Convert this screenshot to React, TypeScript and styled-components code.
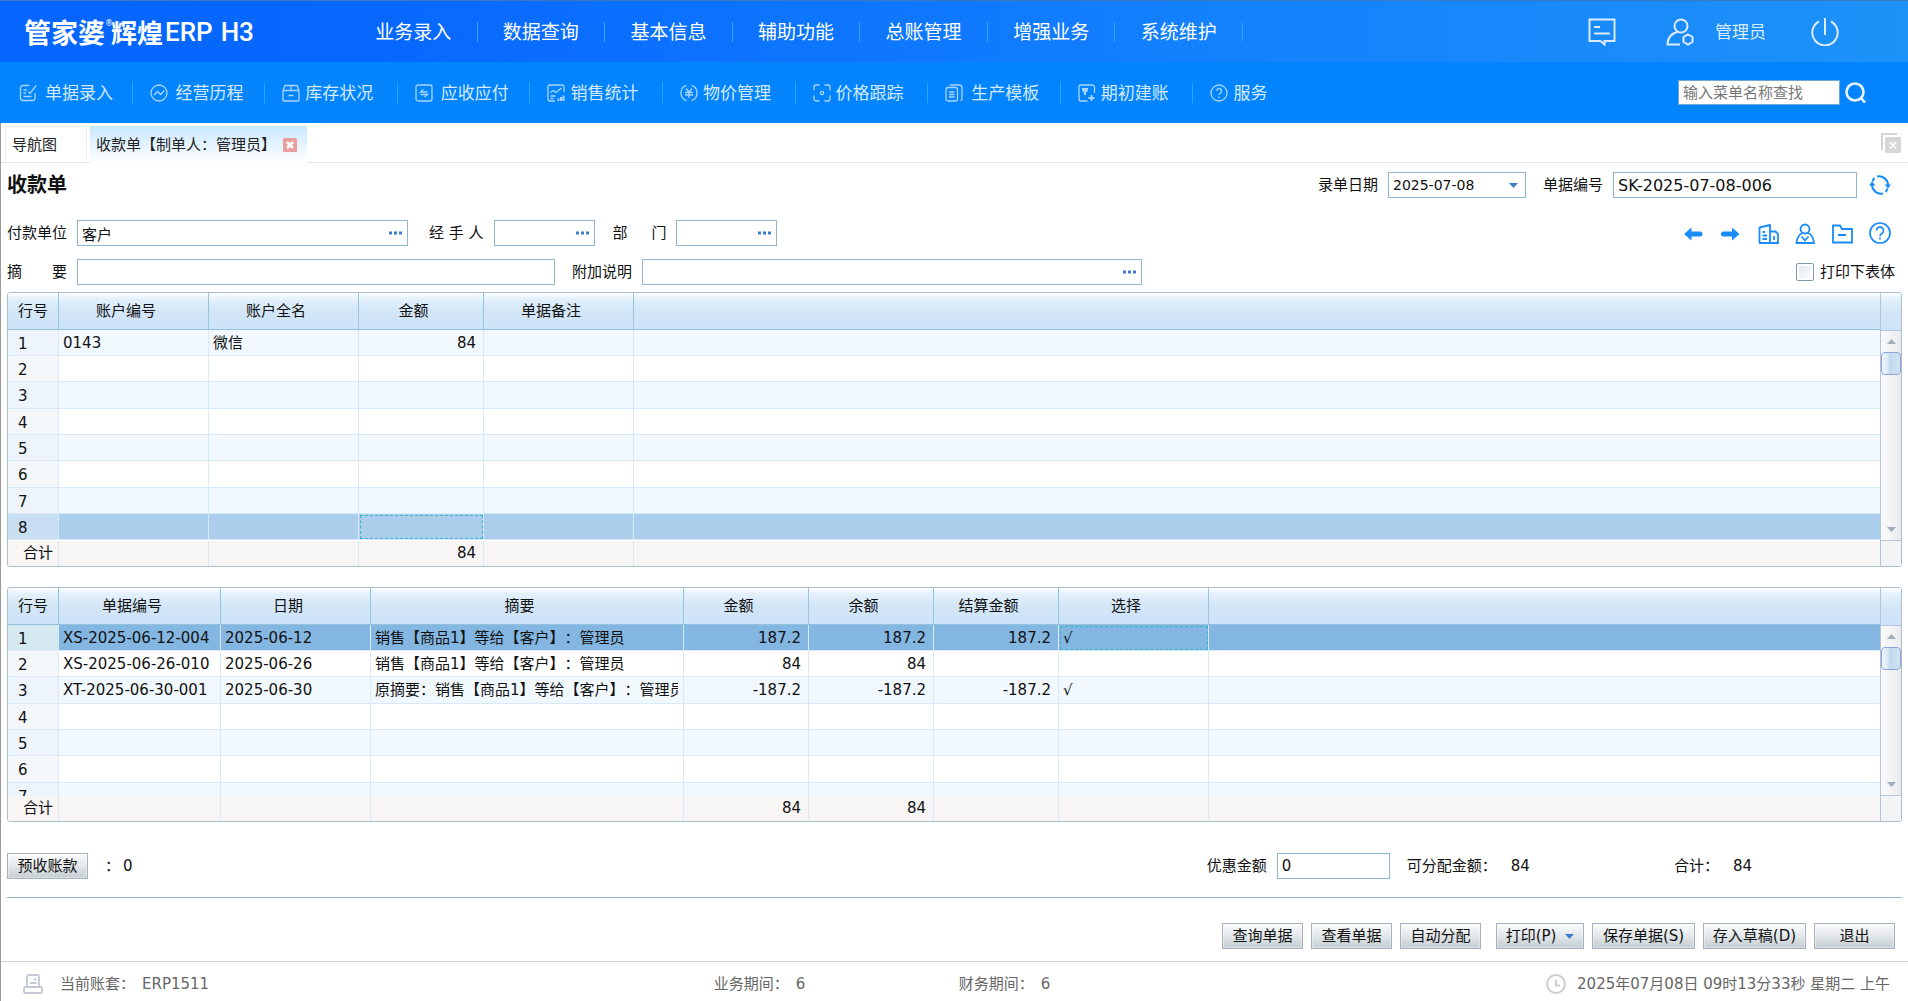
import React from 'react';
import styled, { createGlobalStyle, css } from 'styled-components';

const GlobalStyle = createGlobalStyle`
  *, *::before, *::after { box-sizing: border-box; }
  html, body { margin: 0; background: #fff; }
  body, input, button, select, table {
    font-family: "DejaVu Sans", "Noto Sans CJK SC", sans-serif;
    font-size: 15px;
    line-height: 20px;
    color: #111;
    text-spacing-trim: space-all;
  }
  button { cursor: pointer; }
  a { text-decoration: none; }
`;

/* ---------- shell ---------- */

const Page = styled.div`
  display: flex;
  flex-direction: column;
  min-height: 100vh;
  border-top: 1px solid #3a78bf;
`;

const TopBar = styled.header`
  display: flex;
  align-items: center;
  height: 61px;
  padding: 0 69px 0 24px;
  background: linear-gradient(90deg, #0566ff 0%, #0768ff 20%, #1482fd 66%, #1d92f8 100%);
  color: #fff;
`;

const Brand = styled.div`
  display: flex;
  flex: none;
  align-items: center;
  width: 326px;
  line-height: 28px;
  color: #fff;
  white-space: nowrap;
`;

const BrandName = styled.span<{ $size: number }>`
  font-size: ${(p) => p.$size}px;
  font-weight: 700;
  font-family: "Noto Sans CJK SC", sans-serif;
`;

const BrandMark = styled.sup`
  align-self: flex-start;
  width: 6px;
  font-size: 8px;
  line-height: 12px;
`;

const BrandSuffix = styled.span<{ $before: number; $narrow?: boolean }>`
  margin-left: ${(p) => p.$before}px;
  font-family: ${(p) => (p.$narrow ? '"Liberation Sans Narrow", ' : '')}Roboto, sans-serif;
  font-size: 26px;
  font-weight: 500;
`;

const MainMenu = styled.nav`
  display: grid;
  grid-template-columns: repeat(7, 1fr);
  flex: 0 1 893px;
`;

const MainLink = styled.a`
  height: 20px;
  border-right: 1px solid #35a6ff;
  font-size: 19px;
  line-height: 20px;
  text-align: center;
  color: #fff;
  white-space: nowrap;
`;

const UserArea = styled.div`
  display: flex;
  align-items: center;
  margin-left: auto;
  color: #dcebff;
  font-size: 17px;
  white-space: nowrap;
`;

const IconButton = styled.button<{ $size: number; $color?: string; $gap?: number }>`
  display: flex;
  align-items: center;
  justify-content: center;
  flex: none;
  width: ${(p) => p.$size}px;
  height: ${(p) => p.$size}px;
  margin: 0 0 0 ${(p) => p.$gap ?? 0}px;
  padding: 0;
  border: 0;
  background: none;
  color: ${(p) => p.$color ?? '#dcebff'};
`;

const UserName = styled.span`
  margin: 0 0 0 21px;
`;

const SubBar = styled.div`
  display: flex;
  align-items: center;
  height: 61px;
  padding-right: 42px;
  background: #0384ff;
`;

const SubMenu = styled.nav`
  display: grid;
  grid-template-columns: repeat(10, 1fr);
  flex: 0 1 1326px;
`;

const SubLink = styled.a<{ $wide?: boolean }>`
  display: flex;
  align-items: center;
  gap: ${(p) => (p.$wide ? 8 : 5)}px;
  height: 21px;
  padding-left: 17px;
  border-right: 1px solid #2aa5ff;
  font-size: 17px;
  color: #d5eaff;
  white-space: nowrap;
  &:first-child { padding-left: 19px; }
  &:last-child { border-right: 0; }
  svg { flex: none; color: #a9d5ff; }
`;

const SearchForm = styled.form`
  display: flex;
  align-items: center;
  gap: 5px;
  margin-left: auto;
`;

const SearchInput = styled.input`
  width: 162px;
  height: 25px;
  padding: 0 4px;
  border: 1px solid #6fa8cf;
  background: #fff;
  &::placeholder { color: #777; opacity: 1; }
`;

const Workspace = styled.div`
  display: flex;
  flex: 1;
  flex-direction: column;
  border-left: 1px solid #9a9a9a;
`;

/* ---------- document tabs ---------- */

const TabBar = styled.div`
  display: flex;
  align-items: flex-end;
  height: 40px;
  padding: 0 7px 0 4px;
  border-bottom: 1px solid #e6e6e6;
`;

const Tab = styled.div<{ $active?: boolean }>`
  display: flex;
  align-items: center;
  gap: 7px;
  height: 36px;
  padding: 0 6px;
  color: #222;
  white-space: nowrap;
  ${(p) =>
    p.$active
      ? css`
          width: 217px;
          margin-bottom: -1px;
          height: 37px;
          background: linear-gradient(#c8e8ff, #fff);
        `
      : css`
          width: 82px;
          margin-right: 3px;
          border: 1px solid #ededed;
          border-width: 1px 1px 0;
        `}
`;

const TabLink = styled.a`
  color: #222;
`;

const CloseAll = styled(IconButton)`
  align-self: center;
  margin-left: auto;
`;

/* ---------- form ---------- */

const Content = styled.main`
  display: flex;
  flex-direction: column;
  padding: 9px 6px 12px;
`;

const Line = styled.div<{ $after: number }>`
  display: flex;
  align-items: center;
  height: 26px;
  margin-bottom: ${(p) => p.$after}px;
  white-space: nowrap;
`;

const Title = styled.h1`
  margin: 0;
  font-size: 20px;
  line-height: 26px;
  font-weight: 700;
`;

const RightGroup = styled.div<{ $pad: number; $gap?: number }>`
  display: flex;
  align-items: center;
  gap: ${(p) => p.$gap ?? 0}px;
  margin-left: auto;
  padding-right: ${(p) => p.$pad}px;
`;

const Label = styled.label<{ $before?: number }>`
  margin: 0 10px 0 ${(p) => p.$before ?? 0}px;
  white-space: pre;
`;

const fieldBox = css`
  height: 26px;
  border: 1px solid #8fb6cf;
  background: #fff;
`;

const TextField = styled.input<{ $width: number; $large?: boolean }>`
  ${fieldBox}
  width: ${(p) => p.$width}px;
  padding: 0 4px;
  font-size: ${(p) => (p.$large ? 16 : 15)}px;
`;

const LookupBox = styled.span<{ $width: number }>`
  ${fieldBox}
  display: inline-flex;
  align-items: center;
  width: ${(p) => p.$width}px;
  padding-right: 3px;
`;

const LookupInput = styled.input`
  flex: 1;
  min-width: 0;
  height: 24px;
  padding: 0 4px;
  border: 0;
  background: none;
`;

const LookupButton = styled.button`
  display: flex;
  align-items: center;
  justify-content: center;
  width: 16px;
  height: 22px;
  padding: 0;
  border: 0;
  background: none;
`;

const SelectBox = styled.span`
  position: relative;
  display: inline-flex;
  svg {
    position: absolute;
    right: 8px;
    top: 11px;
    pointer-events: none;
  }
`;

const DateSelect = styled.select`
  ${fieldBox}
  width: 138px;
  padding: 0 4px;
  font-size: 14px;
  appearance: none;
`;

const CheckLabel = styled.label`
  display: flex;
  align-items: center;
  gap: 6px;
`;

const CheckBox = styled.input`
  appearance: none;
  width: 18px;
  height: 18px;
  margin: 0;
  border: 1px solid #8498ab;
  border-radius: 2px;
  background: linear-gradient(135deg, #dfe5ec, #fff);
  box-shadow: inset 0 0 0 2px #fff;
  &:checked { background: #3d7cc9; }
`;

/* ---------- grids ---------- */

const Frame = styled.section<{ $after: number }>`
  display: grid;
  grid-template-columns: minmax(0, 1fr) 21px;
  margin-bottom: ${(p) => p.$after}px;
  border: 1px solid #a9bfce;
  border-radius: 3px;
  overflow: hidden;
`;

const headFill = css`
  background: linear-gradient(#ffffff 0%, #e4f1fc 16%, #d3e6f6 50%, #cde3f9 100%);
`;

const Table = styled.table<{ $columns: string }>`
  display: block;
  thead, tfoot { display: block; }
  tr {
    display: grid;
    grid-template-columns: ${(p) => p.$columns};
  }
`;

const HeadCell = styled.th<{ $first?: boolean }>`
  ${headFill}
  height: 37px;
  padding: ${(p) => (p.$first ? '0' : '0 15px 0 0')};
  border-right: 1px solid #94c6dd;
  border-bottom: 1px solid #94c1dc;
  font-weight: 400;
  line-height: 37px;
  text-align: center;
  &:last-child { border-right: 0; }
`;

const Body = styled.tbody<{ $height: number }>`
  display: block;
  height: ${(p) => p.$height}px;
  overflow: hidden;
`;

const rowTones = {
  picked: { cell: '#abceec', number: '#c8def3' },
  current: { cell: '#84b6e2', number: '#d4eaf0' },
};

const BodyRow = styled.tr<{ $tone?: keyof typeof rowTones }>`
  height: 26px;
  --cell: #f1f9ff;
  --number: #edf4fb;
  &:nth-child(even) { --cell: #fff; --number: #f3f7fa; }
  &:nth-child(3n) { height: 27px; }
  && {
    ${(p) =>
      p.$tone &&
      css`
        --cell: ${rowTones[p.$tone].cell};
        --number: ${rowTones[p.$tone].number};
      `}
  }
`;

const NumberCell = styled.th`
  padding: 4px 0 0 10px;
  border-right: 1px solid #d8eafa;
  border-bottom: 1px solid #d8eafa;
  background: var(--number);
  font-weight: 400;
  text-align: left;
`;

const Cell = styled.td<{ $align?: string; $focus?: boolean }>`
  padding: ${(p) => (p.$align === 'right' ? '3px 7px 0 0' : '3px 5px 0 4px')};
  border-right: 1px solid #d8eafa;
  border-bottom: 1px solid #d8eafa;
  background: var(--cell);
  overflow: hidden;
  white-space: nowrap;
  text-align: ${(p) => p.$align ?? 'left'};
  ${(p) => p.$focus && css`outline: 1px dashed #36b4d0; outline-offset: -2px;`}
  &:last-child { border-right: 0; }
`;

const ClippedText = styled.span`
  display: block;
  overflow: hidden;
`;

const FootCell = styled.td`
  height: 25px;
  padding: 2px 7px 0 0;
  border-right: 1px solid #d8eafa;
  background: #f7f6f4;
  text-align: right;
  &:first-child { padding-right: 5px; }
  &:last-child { border-right: 0; }
`;

const Rail = styled.div`
  display: flex;
  flex-direction: column;
  border-left: 1px solid #b5c4dc;
`;

const RailHead = styled.div`
  ${headFill}
  height: 38px;
  border-bottom: 1px solid #b5c4dc;
`;

const RailTrack = styled.div`
  display: flex;
  flex: 1;
  flex-direction: column;
  align-items: stretch;
  background: linear-gradient(90deg, #fbfbfc, #eaebee);
`;

const RailArrow = styled.button`
  display: flex;
  align-items: center;
  justify-content: center;
  height: 21px;
  padding: 0;
  border: 0;
  background: none;
  &:last-child { margin-top: auto; }
`;

const RailThumb = styled.div`
  height: 23px;
  border: 1px solid #8ba3d8;
  border-radius: 4px;
  background: linear-gradient(90deg, #f0f6fc 0%, #dde9f5 30%, #c2d9ee 45%, #d2e3f4 100%);
`;

const RailFoot = styled.div`
  height: 26px;
  border-top: 1px solid #b5c4dc;
  background: #f2f4f6;
`;

/* ---------- bottom ---------- */

const PushButton = styled.button<{ $width: number; $apart?: boolean }>`
  display: flex;
  align-items: center;
  justify-content: center;
  gap: 9px;
  width: ${(p) => p.$width}px;
  height: 26px;
  margin: 0 0 0 ${(p) => (p.$apart ? 7 : 0)}px;
  padding: 0;
  border: 1px solid #a6b0c0;
  background: linear-gradient(#fafbfb 0%, #e6eaec 45%, #c3ced3 100%);
  box-shadow: inset 0 0 0 1px rgba(255, 255, 255, 0.35);
  white-space: nowrap;
`;

const Caption = styled.span<{ $before?: number; $after?: number }>`
  margin: 0 ${(p) => p.$after ?? 0}px 0 ${(p) => p.$before ?? 0}px;
`;

const Rule = styled.hr`
  width: 100%;
  height: 1px;
  margin: 0 0 25px;
  border: 0;
  background: #94b9d0;
`;

const StatusBar = styled.footer`
  display: grid;
  grid-template-columns: 37% 245px 1fr auto;
  align-items: center;
  height: 41px;
  margin-top: auto;
  padding: 3px 18px 0 22px;
  border-top: 1px solid #c9d1d8;
  color: #666;
  white-space: nowrap;
`;

const StatusItem = styled.span<{ $last?: boolean }>`
  display: flex;
  align-items: center;
  gap: 7px;
  svg { margin-right: ${(p) => (p.$last ? 4 : 10)}px; }
  ${(p) => p.$last && css`grid-column: 4;`}
`;

/* ---------- drawings ---------- */

type IconProps = { size: number; stroke?: number; box?: number; children: React.ReactNode };

const Icon = ({ size, stroke = 1.3, box = 18, children }: IconProps) => (
  <svg width={size} height={size} viewBox={`0 0 ${box} ${box}`} fill="none" stroke="currentColor" strokeWidth={stroke} aria-hidden="true">
    {children}
  </svg>
);

const subIcons: Record<string, React.ReactNode> = {
  entry: (
    <>
      <path d="M10.5 1.5H4A2.5 2.5 0 0 0 1.5 4v10A2.5 2.5 0 0 0 4 16.500h9.500a2.500 2.500 0 0 0 2.500-2.500V9" />
      <path d="M17.200 1.500 11 9.500l-1.500-1.700M4.500 6h3.500M4.500 9h2.500M4.500 12.500h8" />
    </>
  ),
  history: (
    <>
      <circle cx="9" cy="9" r="8" />
      <path d="m4 11 3.500-3.500 3 3L14.500 6.500" />
    </>
  ),
  stock: (
    <>
      <rect x="1" y="6.500" width="16" height="10.500" rx="1" />
      <path d="M1 6.500 3 1.500h12l2 5M9 1.500v5M6.500 11.500h5" />
    </>
  ),
  payable: (
    <>
      <rect x="1" y="1" width="16" height="16" rx="2" />
      <path d="M12.500 8H5.500l3-2.500M5.500 10.500h7l-3 2.500" />
    </>
  ),
  sales: (
    <>
      <path d="M17 8V3a2 2 0 0 0-2-2H3a2 2 0 0 0-2 2v12a2 2 0 0 0 2 2h5" />
      <path d="m3.500 8.500 3-2 2.500 2L14.500 4M3.500 12h5M3.500 14.500h3" />
      <path d="M11.500 17v-2.500M14 17v-4M16.500 17v-5.500" strokeWidth="2" />
    </>
  ),
  price: (
    <>
      <path d="M6.500 1.400a8 8 0 0 0 0 15.200M11.500 1.400a8 8 0 0 1 0 15.200" />
      <path d="m6 4.500 3 3.500 3-3.500M5 8.500h8M5 11h8M9 8v6" />
    </>
  ),
  track: (
    <>
      <path d="M6.500 1H3a2 2 0 0 0-2 2v3.500M11.500 1H15a2 2 0 0 1 2 2v3.500M6.500 17H3a2 2 0 0 1-2-2v-3.500M11.500 17H15a2 2 0 0 0 2-2v-3.500" />
      <circle cx="9" cy="9" r="1.600" />
    </>
  ),
  template: (
    <>
      <rect x="1" y="3.500" width="11.500" height="13.500" rx="2" />
      <path d="M4.500 1H14a3 3 0 0 1 3 3v10.500a2 2 0 0 1-1.500 2M4 8h5.500M4 10.500h5.500M4 13h5.500" />
    </>
  ),
  opening: (
    <>
      <path d="M16.500 9V3a2 2 0 0 0-2-2H3a2 2 0 0 0-2 2v12a2 2 0 0 0 2 2h6.500" />
      <path d="M4 5h6M4.500 7h5M7 5v6" strokeWidth="2" />
      <path d="M13.500 11v6M10.500 14h6" strokeWidth="1.800" />
    </>
  ),
  help: (
    <>
      <circle cx="9" cy="9" r="8" />
      <path d="M6.500 7a2.500 2.500 0 1 1 3.700 2.200c-.9.500-1.200.9-1.200 1.800M9 12.500v1.500" />
    </>
  ),
};

const Triangle = ({ up, color, width = 9 }: { up?: boolean; color: string; width?: number }) => (
  <svg width={width} height="5" viewBox="0 0 9 5" aria-hidden="true">
    <path d={up ? 'M0 5 4.500 0 9 5z' : 'M0 0h9L4.500 5z'} fill={color} />
  </svg>
);

const Lookup = ({ id, width, value = '' }: { id: string; width: number; value?: string }) => (
  <LookupBox $width={width}>
    <LookupInput id={id} defaultValue={value} />
    <LookupButton type="button" aria-label="选择">
      <svg width="14" height="4" viewBox="0 0 14 4" fill="#3d7cc9" aria-hidden="true">
        <rect x="0" y="0.500" width="3" height="3" />
        <rect x="5" y="0.500" width="3" height="3" />
        <rect x="10" y="0.500" width="3" height="3" />
      </svg>
    </LookupButton>
  </LookupBox>
);

/* ---------- data ---------- */

const mainMenu = ['业务录入', '数据查询', '基本信息', '辅助功能', '总账管理', '增强业务', '系统维护'];

const subMenu: { icon: string; text: string; wide?: boolean }[] = [
  { icon: 'entry', text: '单据录入', wide: true },
  { icon: 'history', text: '经营历程', wide: true },
  { icon: 'stock', text: '库存状况' },
  { icon: 'payable', text: '应收应付', wide: true },
  { icon: 'sales', text: '销售统计' },
  { icon: 'price', text: '物价管理' },
  { icon: 'track', text: '价格跟踪' },
  { icon: 'template', text: '生产模板', wide: true },
  { icon: 'opening', text: '期初建账' },
  { icon: 'help', text: '服务' },
];

type Column = { title: string; width: number; align?: 'right' };

type GridProps = {
  columns: Column[];
  rows: string[][];
  totals: string[];
  rowCount: number;
  height: number;
  after: number;
  highlight: { row: number; column: number; tone: keyof typeof rowTones };
};

const accountColumns: Column[] = [
  { title: '账户编号', width: 150 },
  { title: '账户全名', width: 150 },
  { title: '金额', width: 125, align: 'right' },
  { title: '单据备注', width: 150 },
];

const billColumns: Column[] = [
  { title: '单据编号', width: 162 },
  { title: '日期', width: 150 },
  { title: '摘要', width: 313 },
  { title: '金额', width: 125, align: 'right' },
  { title: '余额', width: 125, align: 'right' },
  { title: '结算金额', width: 125, align: 'right' },
  { title: '选择', width: 150 },
];

const billRows = [
  ['XS-2025-06-12-004', '2025-06-12', '销售【商品1】等给【客户】：管理员', '187.2', '187.2', '187.2', '√'],
  ['XS-2025-06-26-010', '2025-06-26', '销售【商品1】等给【客户】：管理员', '84', '84', '', ''],
  ['XT-2025-06-30-001', '2025-06-30', '原摘要：销售【商品1】等给【客户】：管理员', '-187.2', '-187.2', '-187.2', '√'],
];

const DataGrid = ({ columns, rows, totals, rowCount, height, after, highlight }: GridProps) => (
  <Frame $after={after}>
    <Table $columns={`51px ${columns.map((c) => `${c.width}px`).join(' ')} minmax(0, 1fr)`}>
      <thead>
        <tr>
          <HeadCell $first scope="col">行号</HeadCell>
          {columns.map((c) => (
            <HeadCell key={c.title} scope="col">{c.title}</HeadCell>
          ))}
          <HeadCell as="td" />
        </tr>
      </thead>
      <Body $height={height}>
        {Array.from({ length: rowCount }, (_, r) => (
          <BodyRow key={r} $tone={highlight.row === r ? highlight.tone : undefined}>
            <NumberCell scope="row">{r + 1}</NumberCell>
            {columns.map((c, i) => (
              <Cell key={c.title} $align={c.align} $focus={highlight.row === r && highlight.column === i}>
                <ClippedText>{rows[r]?.[i]}</ClippedText>
              </Cell>
            ))}
            <Cell />
          </BodyRow>
        ))}
      </Body>
      <tfoot>
        <tr>
          <FootCell>合计</FootCell>
          {columns.map((c, i) => (
            <FootCell key={c.title}>{totals[i]}</FootCell>
          ))}
          <FootCell />
        </tr>
      </tfoot>
    </Table>
    <Rail>
      <RailHead />
      <RailTrack>
        <RailArrow type="button" aria-label="向上滚动"><Triangle up color="#a3adb8" /></RailArrow>
        <RailThumb />
        <RailArrow type="button" aria-label="向下滚动"><Triangle color="#a3adb8" /></RailArrow>
      </RailTrack>
      <RailFoot />
    </Rail>
  </Frame>
);

const blue = '#1a8cf8';

export default function App() {
  return (
    <Page>
      <GlobalStyle />
      <TopBar>
        <Brand>
          <BrandName $size={27}>管家婆</BrandName>
          <BrandMark>®</BrandMark>
          <BrandName $size={26}>辉煌</BrandName>
          <BrandSuffix $before={2}>ERP</BrandSuffix>
          <BrandSuffix $before={8} $narrow>H3</BrandSuffix>
        </Brand>
        <MainMenu>
          {mainMenu.map((text) => (
            <MainLink key={text} href="#">{text}</MainLink>
          ))}
        </MainMenu>
        <UserArea>
          <IconButton $size={28} type="button" aria-label="消息">
            <Icon size={28} box={28} stroke={2}>
              <path d="M1.500 1.500h25v21.500H16.500v3.500L12.500 23h-11zM6 9h6M6 15.500h16" />
            </Icon>
          </IconButton>
          <IconButton $size={28} $gap={50} type="button" aria-label="用户">
            <Icon size={28} box={28} stroke={2}>
              <circle cx="15" cy="8" r="6.500" />
              <path d="M12 13.500C5.500 15.500 1.500 19.500 1.500 26.500H14M22 16.500l4.500 2.500v5L22 26.500 17.500 24v-5z" />
            </Icon>
          </IconButton>
          <UserName>管理员</UserName>
          <IconButton $size={28} $gap={45} type="button" aria-label="退出系统">
            <Icon size={28} box={28} stroke={2}>
              <path d="M8 3.500a12.700 12.700 0 1 0 12 0M14 0v17" />
            </Icon>
          </IconButton>
        </UserArea>
      </TopBar>
      <SubBar>
        <SubMenu>
          {subMenu.map((m) => (
            <SubLink key={m.text} href="#" $wide={m.wide}>
              <Icon size={18}>{subIcons[m.icon]}</Icon>
              {m.text}
            </SubLink>
          ))}
        </SubMenu>
        <SearchForm onSubmit={(e) => e.preventDefault()}>
          <SearchInput aria-label="菜单名称" placeholder="输入菜单名称查找" />
          <IconButton $size={21} $color="#e8f4ff" aria-label="查找">
            <Icon size={21} box={21} stroke={2.6}>
              <circle cx="10" cy="10" r="8.500" />
              <path d="m15.500 15.500 4.500 5" />
            </Icon>
          </IconButton>
        </SearchForm>
      </SubBar>

      <Workspace>
        <TabBar>
          <Tab><TabLink href="#">导航图</TabLink></Tab>
          <Tab $active>
            <TabLink href="#">收款单【制单人：管理员】</TabLink>
            <IconButton $size={14} type="button" aria-label="关闭">
              <svg width="14" height="14" viewBox="0 0 14 14" aria-hidden="true">
                <rect width="14" height="14" rx="1.500" fill="#eb9c9c" />
                <path d="m4 4 6 6M10 4l-6 6" stroke="#fff" strokeWidth="2.600" />
              </svg>
            </IconButton>
          </Tab>
          <CloseAll $size={20} type="button" aria-label="全部关闭">
            <svg width="20" height="20" viewBox="0 0 20 20" aria-hidden="true">
              <path d="M1 17V1h15" fill="none" stroke="#d4d4d4" strokeWidth="2" />
              <rect x="4" y="4" width="16" height="16" rx="1.500" fill="#d6d6d6" />
              <path d="m9 9 6 6.500M15 9l-6 6.500" stroke="#fff" strokeWidth="1.600" />
            </svg>
          </CloseAll>
        </TabBar>

        <Content>
          <Line $after={22}>
            <Title>收款单</Title>
            <RightGroup $pad={11}>
              <Label htmlFor="date">录单日期</Label>
              <SelectBox>
                <DateSelect id="date" defaultValue="2025-07-08">
                  <option>2025-07-08</option>
                </DateSelect>
                <Triangle color="#3d7cc9" />
              </SelectBox>
              <Label htmlFor="number" $before={17}>单据编号</Label>
              <TextField id="number" $width={244} $large defaultValue="SK-2025-07-08-006" />
              <IconButton $size={22} $gap={12} $color={blue} type="button" aria-label="刷新">
                <Icon size={22} box={22} stroke={2}>
                  <path d="M8 2.500a9 9 0 0 1 11 8.500M14 19.500A9 9 0 0 1 3 11M3.500 7.500A9 9 0 0 1 5.500 4M18.500 14.500a9 9 0 0 1-2 3.500" />
                  <path d="m0 11.500 3-4 3.500 4zM22 10.500l-3 4-3.500-4z" fill="currentColor" stroke="none" />
                </Icon>
              </IconButton>
            </RightGroup>
          </Line>

          <Line $after={13}>
            <Label htmlFor="payer">付款单位</Label>
            <Lookup id="payer" width={331} value="客户" />
            <Label htmlFor="handler" $before={21}>经 手 人</Label>
            <Lookup id="handler" width={101} />
            <Label htmlFor="department" $before={18}>部     门</Label>
            <Lookup id="department" width={101} />
            <RightGroup $pad={11} $gap={15}>
              <IconButton $size={22} $color={blue} type="button" aria-label="上一张">
                <Icon size={22} box={22}>
                  <path d="M0 12 7.500 5.500V9.500H16A2.500 2.500 0 0 1 16 14.500H7.500V18.500z" fill="currentColor" stroke="none" />
                </Icon>
              </IconButton>
              <IconButton $size={22} $color={blue} type="button" aria-label="下一张">
                <Icon size={22} box={22}>
                  <path d="M18.500 12 11 5.500V9.500H2.500A2.500 2.500 0 0 0 2.500 14.500H11V18.500z" fill="currentColor" stroke="none" />
                </Icon>
              </IconButton>
              <IconButton $size={22} $color={blue} type="button" aria-label="单位">
                <Icon size={22} box={22} stroke={1.8}>
                  <path d="M1.500 21V5.500L12 3v18M12 9.500H17.500l2.500 2.500v9H1M4.500 10h2.500M4.500 13.500h4.500M4.500 17h4.500M16 14v4" />
                </Icon>
              </IconButton>
              <IconButton $size={22} $color={blue} type="button" aria-label="职员">
                <Icon size={22} box={22} stroke={1.8}>
                  <circle cx="10" cy="7" r="4.500" />
                  <path d="M7.500 11c-3.500 1.500-5.500 5-6 10h17.500c-.5-5-2.500-8.500-6-10M6.500 14.500l3.500 4 3.500-4" />
                </Icon>
              </IconButton>
              <IconButton $size={22} $color={blue} type="button" aria-label="文件夹">
                <Icon size={22} box={22} stroke={1.8}>
                  <path d="M1 20.500V3.500h7l2 3.500h10v13.500zM6 13h8" />
                </Icon>
              </IconButton>
              <IconButton $size={22} $color={blue} type="button" aria-label="帮助">
                <Icon size={22} box={22} stroke={1.700}>
                  <circle cx="11" cy="11" r="10" />
                  <path d="M7.500 8.500a3.500 3.500 0 1 1 5.300 3c-1.300.8-1.800 1.300-1.800 2.700M11 15.500v2" />
                </Icon>
              </IconButton>
            </RightGroup>
          </Line>

          <Line $after={7}>
            <Label htmlFor="summary">摘　　要</Label>
            <TextField id="summary" $width={478} />
            <Label htmlFor="note" $before={17}>附加说明</Label>
            <Lookup id="note" width={500} />
            <RightGroup $pad={7}>
              <CheckLabel>
                <CheckBox type="checkbox" />
                打印下表体
              </CheckLabel>
            </RightGroup>
          </Line>

          <DataGrid
            columns={accountColumns}
            rows={[['0143', '微信', '84', '']]}
            totals={['', '', '84']}
            rowCount={8}
            height={211}
            after={20}
            highlight={{ row: 7, column: 2, tone: 'picked' }}
          />
          <DataGrid
            columns={billColumns}
            rows={billRows}
            totals={['', '', '', '84', '84']}
            rowCount={7}
            height={171}
            after={31}
            highlight={{ row: 0, column: 6, tone: 'current' }}
          />

          <Line $after={18}>
            <PushButton $width={81} type="button">预收账款</PushButton>
            <Caption $before={17} $after={3}>：</Caption>
            <span>0</span>
            <RightGroup $pad={150}>
              <Label htmlFor="discount">优惠金额</Label>
              <TextField id="discount" $width={113} defaultValue="0" />
              <Caption $before={17} $after={14}>可分配金额：</Caption>
              <span>84</span>
              <Caption $before={144} $after={14}>合计：</Caption>
              <span>84</span>
            </RightGroup>
          </Line>
          <Rule />
          <Line $after={0}>
            <RightGroup $pad={7} $gap={8}>
              <PushButton $width={81} type="button">查询单据</PushButton>
              <PushButton $width={81} type="button">查看单据</PushButton>
              <PushButton $width={81} type="button">自动分配</PushButton>
              <PushButton $width={88} $apart type="button">
                打印(P)
                <Triangle color="#3d7cc9" />
              </PushButton>
              <PushButton $width={103} type="button">保存单据(S)</PushButton>
              <PushButton $width={103} type="button">存入草稿(D)</PushButton>
              <PushButton $width={81} type="button">退出</PushButton>
            </RightGroup>
          </Line>
        </Content>

        <StatusBar>
          <StatusItem>
            <svg width="20" height="20" viewBox="0 0 20 20" fill="none" stroke="#c3c8d4" strokeWidth="1.800" aria-hidden="true">
              <path d="M4 12.500V3a2 2 0 0 1 2-2h8a2 2 0 0 1 2 2v9.500M7 9h6.500M11 5.500h2.500" />
              <rect x="1" y="13" width="18" height="6" rx="1.500" />
            </svg>
            <span>当前账套：</span>
            <span>ERP1511</span>
          </StatusItem>
          <StatusItem>
            <span>业务期间：</span>
            <span>6</span>
          </StatusItem>
          <StatusItem>
            <span>财务期间：</span>
            <span>6</span>
          </StatusItem>
          <StatusItem $last>
            <svg width="20" height="20" viewBox="0 0 20 20" fill="none" stroke="#cdcdcd" strokeWidth="2" aria-hidden="true">
              <circle cx="10" cy="10" r="9" />
              <path d="M10 6v5.500h4" />
            </svg>
            <time dateTime="2025-07-08T09:13:33">2025年07月08日 09时13分33秒 星期二 上午</time>
          </StatusItem>
        </StatusBar>
      </Workspace>
    </Page>
  );
}
